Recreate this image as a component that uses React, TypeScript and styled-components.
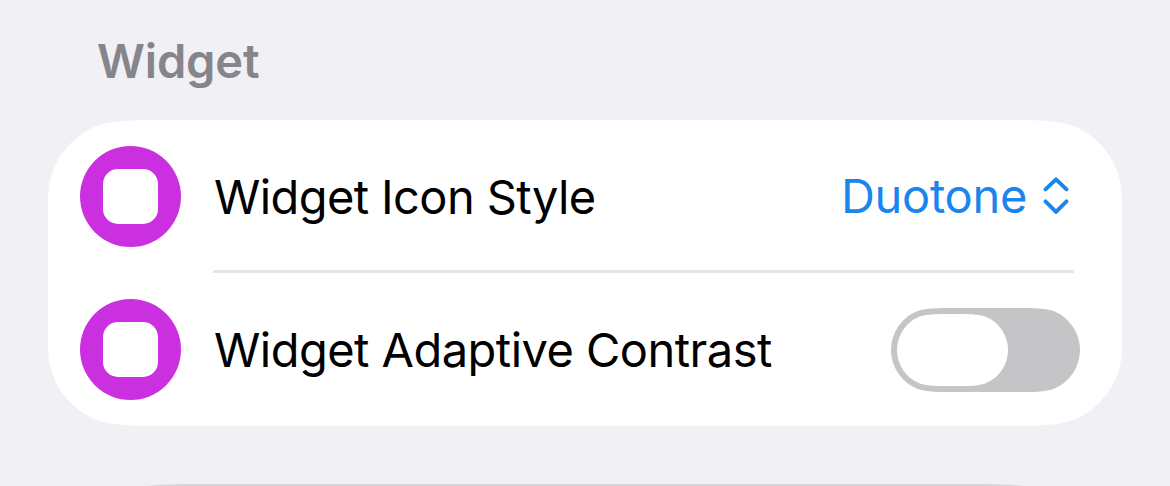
import React from 'react';
import styled, { createGlobalStyle } from 'styled-components';

/* Rounded rectangle with circular sides that ease into its long edges. */
const smoothRect = (w: number, h: number, r: number) => {
  const n = (v: number) => v.toFixed(2);
  const e = 1.52866 * r;
  const a = 1.08849 * r;
  const b = 0.86841 * r;
  const c = 0.63149 * r;
  const d = 0.0725 * r;
  return (
    `M${n(e)} 0L${n(w - e)} 0C${n(w - a)} 0 ${n(w - b)} 0 ${n(w - c)} ${n(d)}` +
    `A${r} ${r} 0 0 1 ${w} ${r}L${w} ${h - r}A${r} ${r} 0 0 1 ${n(w - c)} ${n(h - d)}` +
    `C${n(w - b)} ${h} ${n(w - a)} ${h} ${n(w - e)} ${h}L${n(e)} ${h}` +
    `C${n(a)} ${h} ${n(b)} ${h} ${n(c)} ${n(h - d)}` +
    `A${r} ${r} 0 0 1 0 ${h - r}L0 ${r}A${r} ${r} 0 0 1 ${n(c)} ${n(d)}C${n(b)} 0 ${n(a)} 0 ${n(e)} 0Z`
  );
};

const GlobalStyle = createGlobalStyle`
  html, body { margin: 0; background: #f1f0f5; }
  * { box-sizing: border-box; }
`;

const Screen = styled.main`
  height: 486px;
  padding: 33px 48px 0;
  overflow: hidden;
  display: flex;
  flex-direction: column;
  background: #f1f0f5;
  font-family: Inter, sans-serif;
`;

const SectionTitle = styled.h2`
  margin: 0 0 31px 49px;
  height: 56px;
  font-size: 47px;
  line-height: 56px;
  font-weight: 600;
  letter-spacing: -0.15px;
  color: #86858b;
`;

const Card = styled.section`
  flex: none;
  width: 1074px;
  height: 306px;
  clip-path: path('${smoothRect(1074, 306, 78)}');
  background: #fff;
`;

const Row = styled.div`
  height: 153px;
  padding-left: 32px;
  display: flex;
`;

const IconBadge = styled.div`
  flex: none;
  width: 101px;
  height: 101px;
  margin: 26px 32px 0 0;
  border-radius: 50%;
  display: grid;
  place-items: center;
  background: #cb30e0;
`;

const IconTile = styled.div`
  width: 55px;
  height: 55px;
  border-radius: 15px;
  background: #fff;
`;

const RowBody = styled.div<{ $divided?: boolean; $end: number }>`
  flex: 1;
  margin-right: 48px;
  padding-right: ${(p) => p.$end}px;
  padding-left: 1px;
  border-bottom: 3px solid ${(p) => (p.$divided ? '#e6e6e6' : 'transparent')};
  display: flex;
  align-items: center;
  justify-content: space-between;
`;

const Label = styled.span<{ $tracking: number }>`
  padding-top: 4px;
  font-size: 47px;
  line-height: 56px;
  letter-spacing: ${(p) => p.$tracking}px;
  white-space: nowrap;
  color: #000;
`;

const Picker = styled.button`
  border: 0;
  padding: 2px 0 0;
  background: none;
  display: flex;
  align-items: center;
  gap: 15px;
  font: inherit;
  font-size: 47px;
  line-height: 56px;
  letter-spacing: -0.3px;
  color: #1a86ec;
`;

const Switch = styled.button`
  flex: none;
  width: 189px;
  height: 84px;
  margin: 4px -6px 0 0;
  padding: 6px;
  border: 0;
  clip-path: path('${smoothRect(189, 84, 42)}');
  background: #c5c5c7;
`;

const Knob = styled.span`
  display: block;
  width: 111px;
  height: 72px;
  clip-path: path('${smoothRect(111, 72, 36)}');
  background: #fff;
`;

const NextCard = styled.section`
  flex: none;
  width: 1074px;
  height: 459px;
  margin-top: 58px;
  clip-path: path('${smoothRect(1074, 459, 110)}');
  background: #d6d6d9;
`;

const WidgetIcon = () => (
  <IconBadge>
    <IconTile />
  </IconBadge>
);

const UpDownChevrons = () => (
  <svg width="28" height="40" viewBox="0 0 28 40" fill="none" stroke="currentColor" strokeWidth="4" strokeLinecap="round" strokeLinejoin="round">
    <path d="M3.5 13.4 14 3.4 24.5 13.4M3.5 25.4 14 35.8 24.5 25.4" />
  </svg>
);

export default function App() {
  return (
    <>
      <GlobalStyle />
      <Screen>
        <SectionTitle>Widget</SectionTitle>
        <Card>
          <Row>
            <WidgetIcon />
            <RowBody $divided $end={4}>
              <Label $tracking={-0.6}>Widget Icon Style</Label>
              <Picker>
                Duotone
                <UpDownChevrons />
              </Picker>
            </RowBody>
          </Row>
          <Row>
            <WidgetIcon />
            <RowBody $end={0}>
              <Label $tracking={-0.53}>Widget Adaptive Contrast</Label>
              <Switch role="switch" aria-checked={false} aria-label="Widget Adaptive Contrast">
                <Knob />
              </Switch>
            </RowBody>
          </Row>
        </Card>
        <NextCard />
      </Screen>
    </>
  );
}
